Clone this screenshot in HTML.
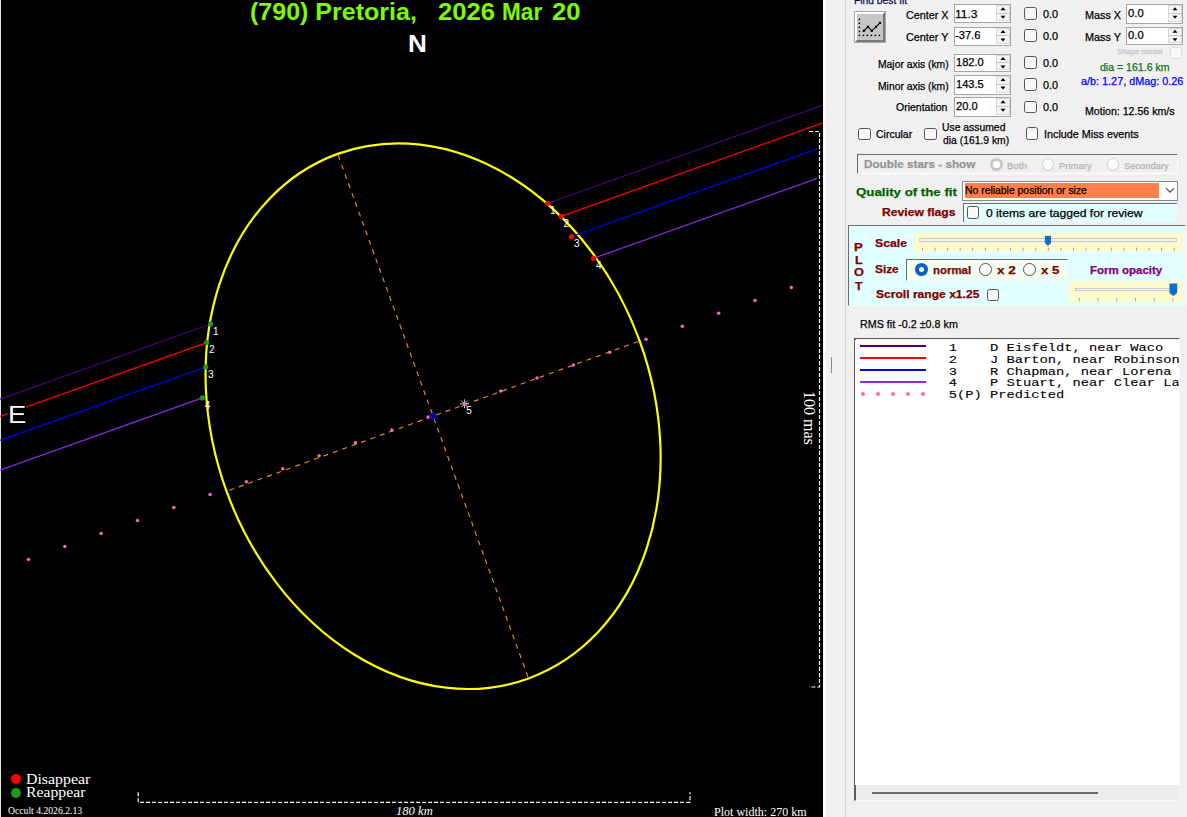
<!DOCTYPE html>
<html><head><meta charset="utf-8">
<style>
html,body{margin:0;padding:0;}
body{width:1187px;height:817px;position:relative;overflow:hidden;background:#ececec;font-family:"Liberation Sans",sans-serif;}
.a{position:absolute;white-space:pre;transform-origin:0 0;line-height:normal;}
.pt{-webkit-text-stroke:0.25px currentColor;}
svg text.lbl{font-family:"Liberation Sans",sans-serif;font-size:10px;fill:#fff;}
.mono{font-family:"Liberation Mono",monospace;font-size:13.75px;color:#000;-webkit-text-stroke:0.12px #000;}
</style></head><body>
<svg width="823" height="817" viewBox="0 0 823 817" style="position:absolute;left:0;top:0">
<rect x="0" y="0" width="823" height="817" fill="#000"/>
<rect x="0" y="0" width="1" height="817" fill="#e4e4e4"/>
<circle cx="28.5" cy="559.4" r="1.75" fill="#ff62c4"/>
<circle cx="64.8" cy="546.4" r="1.75" fill="#ff62c4"/>
<circle cx="101.1" cy="533.5" r="1.75" fill="#ff62c4"/>
<circle cx="137.5" cy="520.5" r="1.75" fill="#ff62c4"/>
<circle cx="173.8" cy="507.6" r="1.75" fill="#ff62c4"/>
<circle cx="210.1" cy="494.6" r="1.75" fill="#ff62c4"/>
<circle cx="246.4" cy="481.7" r="1.75" fill="#ff62c4"/>
<circle cx="282.8" cy="468.7" r="1.75" fill="#ff62c4"/>
<circle cx="319.1" cy="455.8" r="1.75" fill="#ff62c4"/>
<circle cx="355.4" cy="442.8" r="1.75" fill="#ff62c4"/>
<circle cx="391.7" cy="429.9" r="1.75" fill="#ff62c4"/>
<circle cx="428.1" cy="416.9" r="1.75" fill="#ff62c4"/>
<circle cx="464.4" cy="404.0" r="1.75" fill="#ff62c4"/>
<circle cx="500.7" cy="391.0" r="1.75" fill="#ff62c4"/>
<circle cx="537.0" cy="378.1" r="1.75" fill="#ff62c4"/>
<circle cx="573.4" cy="365.1" r="1.75" fill="#ff62c4"/>
<circle cx="609.7" cy="352.2" r="1.75" fill="#ff62c4"/>
<circle cx="646.0" cy="339.2" r="1.75" fill="#ff62c4"/>
<circle cx="682.3" cy="326.3" r="1.75" fill="#ff62c4"/>
<circle cx="718.7" cy="313.3" r="1.75" fill="#ff62c4"/>
<circle cx="755.0" cy="300.4" r="1.75" fill="#ff62c4"/>
<circle cx="791.3" cy="287.4" r="1.75" fill="#ff62c4"/>
<line x1="638.2" y1="341.5" x2="228.0" y2="490.8" stroke="#f08c0a" stroke-width="1.15" stroke-dasharray="5 5"/>
<line x1="338.2" y1="155.3" x2="528.0" y2="677.0" stroke="#f08c0a" stroke-width="1.15" stroke-dasharray="5 5"/>
<ellipse cx="433.1" cy="416.15" rx="219.8" ry="279.1" transform="rotate(-20 433.1 416.15)" fill="none" stroke="#ffff00" stroke-width="2.2"/>
<line x1="0" y1="399.2" x2="210.6" y2="324.0" stroke="#4b0082" stroke-width="1.2"/>
<line x1="547.7" y1="203.3" x2="823" y2="105.0" stroke="#4b0082" stroke-width="1.2"/>
<line x1="0" y1="416.4" x2="206.7" y2="342.6" stroke="#ff0000" stroke-width="1.2"/>
<line x1="561.2" y1="216.4" x2="823" y2="122.9" stroke="#ff0000" stroke-width="1.2"/>
<line x1="0" y1="440.4" x2="205.7" y2="367.0" stroke="#0000ff" stroke-width="1.2"/>
<line x1="571.6" y1="236.5" x2="823" y2="146.8" stroke="#0000ff" stroke-width="1.2"/>
<line x1="0" y1="470.2" x2="202.4" y2="397.9" stroke="#8a2be2" stroke-width="1.2"/>
<line x1="593.6" y1="258.3" x2="823" y2="176.4" stroke="#8a2be2" stroke-width="1.2"/>
<circle cx="432.8" cy="416.2" r="2.6" fill="none" stroke="#0000ff" stroke-width="1.8"/>
<g stroke="#b8d8d8" stroke-width="0.9">
<line x1="460" y1="403.8" x2="469" y2="403.8"/><line x1="464.5" y1="399.3" x2="464.5" y2="408.3"/>
<line x1="461.3" y1="400.6" x2="467.7" y2="407"/><line x1="461.3" y1="407" x2="467.7" y2="400.6"/>
</g>
<circle cx="464.5" cy="403.8" r="1.8" fill="#ff69b4"/>
<text x="466.2" y="413.8" class="lbl">5</text>
<circle cx="210.6" cy="324.0" r="2.6" fill="#1e9a1e"/>
<circle cx="547.7" cy="203.3" r="2.6" fill="#ff0000"/>
<text x="212.9" y="334.8" class="lbl">1</text>
<text x="550.0" y="214.10000000000002" class="lbl">1</text>
<circle cx="206.7" cy="342.6" r="2.6" fill="#1e9a1e"/>
<circle cx="561.2" cy="216.4" r="2.6" fill="#ff0000"/>
<text x="209.0" y="353.40000000000003" class="lbl">2</text>
<text x="563.5" y="227.20000000000002" class="lbl">2</text>
<circle cx="205.7" cy="367.0" r="2.6" fill="#1e9a1e"/>
<circle cx="571.6" cy="236.5" r="2.6" fill="#ff0000"/>
<text x="208.0" y="377.8" class="lbl">3</text>
<text x="573.9" y="247.3" class="lbl">3</text>
<circle cx="202.4" cy="397.9" r="2.6" fill="#1e9a1e"/>
<circle cx="593.6" cy="258.3" r="2.6" fill="#ff0000"/>
<text x="204.70000000000002" y="408.7" class="lbl">4</text>
<text x="595.9" y="269.1" class="lbl">4</text>
<path d="M809 131.5 H819.5 V687 H809" fill="none" stroke="#000" stroke-width="5"/>
<path d="M809 131.5 H819.5 V687 H809" fill="none" stroke="#fff" stroke-width="1.2" stroke-dasharray="4 2"/>
<path d="M138.2 792.2 V802.3 H690 V792.2" fill="none" stroke="#fff" stroke-width="1.2" stroke-dasharray="4 2"/>

</svg>
<div class="a" style="left:249.74px;top:-1.5px;font-family:'Liberation Sans',sans-serif;font-size:23px;font-weight:bold;font-style:normal;color:#7cfc00;transform:scaleX(1.0876);">(790) Pretoria,</div><div class="a" style="left:437.63px;top:-1.5px;font-family:'Liberation Sans',sans-serif;font-size:23px;font-weight:bold;font-style:normal;color:#7cfc00;transform:scaleX(1.1157);">2026</div><div class="a" style="left:501.96px;top:-1.5px;font-family:'Liberation Sans',sans-serif;font-size:23px;font-weight:bold;font-style:normal;color:#7cfc00;transform:scaleX(0.9822);">Mar</div><div class="a" style="left:552.13px;top:-1.5px;font-family:'Liberation Sans',sans-serif;font-size:23px;font-weight:bold;font-style:normal;color:#7cfc00;transform:scaleX(1.1146);">20</div><div class="a" style="left:407.81px;top:31.0px;font-family:'Liberation Sans',sans-serif;font-size:23.5px;font-weight:bold;font-style:normal;color:#ffffff;transform:scaleX(1.1106);">N</div><div class="a" style="left:8px;top:401px;width:17.7px;height:26px;background:#000"></div><div class="a" style="left:7.83px;top:402.01px;font-family:'Liberation Sans',sans-serif;font-size:23px;font-weight:normal;font-style:normal;color:#ffffff;transform:scaleX(1.1885);">E</div><div class="a" style="left:25.59px;top:770.5px;font-family:'Liberation Serif',serif;font-size:15px;font-weight:normal;font-style:normal;color:#ffffff;transform:scaleX(1.0574);">Disappear</div><div class="a" style="left:25.61px;top:784.4px;font-family:'Liberation Serif',serif;font-size:15px;font-weight:normal;font-style:normal;color:#ffffff;transform:scaleX(1.0489);">Reappear</div><div class="a" style="left:7.53px;top:804.87px;font-family:'Liberation Serif',serif;font-size:10.5px;font-weight:normal;font-style:normal;color:#ffffff;transform:scaleX(0.9204);">Occult 4.2026.2.13</div><div class="a" style="left:395.9px;top:804.29px;font-family:'Liberation Serif',serif;font-size:12.5px;font-weight:normal;font-style:italic;color:#ffffff;transform:scaleX(1.0077);">180 km</div><div class="a" style="left:713.61px;top:803.86px;font-family:'Liberation Serif',serif;font-size:13px;font-weight:normal;font-style:normal;color:#ffffff;transform:scaleX(0.9255);">Plot width: 270 km</div><div class="a" style="left:10.5px;top:773.5px;width:10.2px;height:10.0px;background:#f00;border-radius:50%"></div><div class="a" style="left:10.5px;top:787.8px;width:10.2px;height:10.0px;background:#219421;border-radius:50%"></div><div class="a" style="left:818px;top:391.2px;font-family:'Liberation Serif',serif;font-size:16px;color:#fff;transform:rotate(90deg);transform-origin:0 0;">100 mas</div>
<div class="a" style="left:823px;top:0px;width:364px;height:817px;background:#f0f0f0"></div><div class="a" style="left:823px;top:0px;width:3px;height:817px;background:#fbfbfb"></div><div class="a" style="left:845px;top:0px;width:1px;height:817px;background:#d4d4d4"></div><div class="a" style="left:854px;top:11px;width:32px;height:31.5px;background:#a8a8a8"></div><div class="a" style="left:855px;top:12px;width:30px;height:29.5px;background:#c6c6c6;border-top:2px solid #fff;border-left:2px solid #fff;border-right:2px solid #787878;border-bottom:2px solid #787878;box-sizing:border-box"></div><svg class="a" style="left:854px;top:11px" width="32" height="32"><g fill="#000"><rect x="4.65" y="7.65" width="1.5" height="1.5"/><rect x="4.65" y="11.55" width="1.5" height="1.5"/><rect x="4.65" y="15.55" width="1.5" height="1.5"/><rect x="4.65" y="19.75" width="1.5" height="1.5"/><rect x="4.65" y="23.65" width="1.5" height="1.5"/><rect x="8.75" y="23.65" width="1.5" height="1.5"/><rect x="12.65" y="23.65" width="1.5" height="1.5"/><rect x="16.65" y="23.65" width="1.5" height="1.5"/><rect x="20.75" y="23.65" width="1.5" height="1.5"/><rect x="24.65" y="23.65" width="1.5" height="1.5"/><rect x="8.700000000000001" y="18.7" width="2.2" height="2.2"/><rect x="12.9" y="14.700000000000001" width="2.2" height="2.2"/><rect x="16.7" y="18.7" width="2.2" height="2.2"/><rect x="20.9" y="14.700000000000001" width="2.2" height="2.2"/><rect x="24.9" y="10.8" width="2.2" height="2.2"/></g><polyline points="9.8,19.8 14,15.8 17.8,19.8 22,15.8 26,11.9" fill="none" stroke="#000" stroke-width="1.1"/></svg><div class="a" style="left:954.1px;top:3.8px;width:57.39999999999998px;height:19.5px;background:#fff;border:1px solid #a6a6a6;box-sizing:border-box"></div><div class="a" style="left:996.0px;top:4.8px;width:13.5px;height:16.5px;background:#f4f4f4;border:1px solid #d8d8d8;box-sizing:border-box"></div><div class="a" style="left:996.0px;top:12.55px;width:13.5px;height:1.0px;background:#c8c8c8"></div><svg class="a" style="left:998.75px;top:3.8px" width="8" height="19.5"><polygon points="1.5,6.25 4,3.25 6.5,6.25" fill="#000"/><polygon points="1.5,11.75 6.5,11.75 4,14.75" fill="#000"/></svg><div class="a" style="left:954.1px;top:26.6px;width:57.39999999999998px;height:19.0px;background:#fff;border:1px solid #a6a6a6;box-sizing:border-box"></div><div class="a" style="left:996.0px;top:27.6px;width:13.5px;height:16.0px;background:#f4f4f4;border:1px solid #d8d8d8;box-sizing:border-box"></div><div class="a" style="left:996.0px;top:35.1px;width:13.5px;height:1.0px;background:#c8c8c8"></div><svg class="a" style="left:998.75px;top:26.6px" width="8" height="19.0"><polygon points="1.5,6.0 4,3.0 6.5,6.0" fill="#000"/><polygon points="1.5,11.5 6.5,11.5 4,14.5" fill="#000"/></svg><div class="a" style="left:954.1px;top:53.5px;width:57.39999999999998px;height:18.900000000000006px;background:#fff;border:1px solid #a6a6a6;box-sizing:border-box"></div><div class="a" style="left:996.0px;top:54.5px;width:13.5px;height:15.900000000000006px;background:#f4f4f4;border:1px solid #d8d8d8;box-sizing:border-box"></div><div class="a" style="left:996.0px;top:61.95px;width:13.5px;height:1.0px;background:#c8c8c8"></div><svg class="a" style="left:998.75px;top:53.5px" width="8" height="18.900000000000006"><polygon points="1.5,5.950000000000003 4,2.950000000000003 6.5,5.950000000000003" fill="#000"/><polygon points="1.5,11.450000000000003 6.5,11.450000000000003 4,14.450000000000003" fill="#000"/></svg><div class="a" style="left:954.1px;top:75.4px;width:57.39999999999998px;height:19.19999999999999px;background:#fff;border:1px solid #a6a6a6;box-sizing:border-box"></div><div class="a" style="left:996.0px;top:76.4px;width:13.5px;height:16.19999999999999px;background:#f4f4f4;border:1px solid #d8d8d8;box-sizing:border-box"></div><div class="a" style="left:996.0px;top:84.0px;width:13.5px;height:1.0px;background:#c8c8c8"></div><svg class="a" style="left:998.75px;top:75.4px" width="8" height="19.19999999999999"><polygon points="1.5,6.099999999999994 4,3.0999999999999943 6.5,6.099999999999994" fill="#000"/><polygon points="1.5,11.599999999999994 6.5,11.599999999999994 4,14.599999999999994" fill="#000"/></svg><div class="a" style="left:954.1px;top:97.2px;width:57.39999999999998px;height:19.39999999999999px;background:#fff;border:1px solid #a6a6a6;box-sizing:border-box"></div><div class="a" style="left:996.0px;top:98.2px;width:13.5px;height:16.39999999999999px;background:#f4f4f4;border:1px solid #d8d8d8;box-sizing:border-box"></div><div class="a" style="left:996.0px;top:105.9px;width:13.5px;height:1.0px;background:#c8c8c8"></div><svg class="a" style="left:998.75px;top:97.2px" width="8" height="19.39999999999999"><polygon points="1.5,6.200000000000003 4,3.200000000000003 6.5,6.200000000000003" fill="#000"/><polygon points="1.5,11.700000000000003 6.5,11.700000000000003 4,14.700000000000003" fill="#000"/></svg><div class="a" style="left:1126.4px;top:4.3px;width:57.09999999999991px;height:19.3px;background:#fff;border:1px solid #a6a6a6;box-sizing:border-box"></div><div class="a" style="left:1168.0px;top:5.3px;width:13.5px;height:16.3px;background:#f4f4f4;border:1px solid #d8d8d8;box-sizing:border-box"></div><div class="a" style="left:1168.0px;top:12.950000000000001px;width:13.5px;height:1.0px;background:#c8c8c8"></div><svg class="a" style="left:1170.75px;top:4.3px" width="8" height="19.3"><polygon points="1.5,6.150000000000002 4,3.150000000000002 6.5,6.150000000000002" fill="#000"/><polygon points="1.5,11.650000000000002 6.5,11.650000000000002 4,14.650000000000002" fill="#000"/></svg><div class="a" style="left:1126.4px;top:26.6px;width:57.09999999999991px;height:18.5px;background:#fff;border:1px solid #a6a6a6;box-sizing:border-box"></div><div class="a" style="left:1168.0px;top:27.6px;width:13.5px;height:15.5px;background:#f4f4f4;border:1px solid #d8d8d8;box-sizing:border-box"></div><div class="a" style="left:1168.0px;top:34.85px;width:13.5px;height:1.0px;background:#c8c8c8"></div><svg class="a" style="left:1170.75px;top:26.6px" width="8" height="18.5"><polygon points="1.5,5.75 4,2.75 6.5,5.75" fill="#000"/><polygon points="1.5,11.25 6.5,11.25 4,14.25" fill="#000"/></svg><div class="a" style="left:1024.2px;top:7.2px;width:12.400000000000091px;height:12.400000000000002px;border:1.4px solid #555;border-radius:2.5px;box-sizing:border-box;background:#f8f8f8"></div><div class="a" style="left:1024.2px;top:29.2px;width:12.400000000000091px;height:12.400000000000002px;border:1.4px solid #555;border-radius:2.5px;box-sizing:border-box;background:#f8f8f8"></div><div class="a" style="left:1024.2px;top:56.4px;width:12.400000000000091px;height:12.399999999999999px;border:1.4px solid #555;border-radius:2.5px;box-sizing:border-box;background:#f8f8f8"></div><div class="a" style="left:1024.2px;top:78.3px;width:12.400000000000091px;height:12.400000000000006px;border:1.4px solid #555;border-radius:2.5px;box-sizing:border-box;background:#f8f8f8"></div><div class="a" style="left:1024.2px;top:100.5px;width:12.400000000000091px;height:12.400000000000006px;border:1.4px solid #555;border-radius:2.5px;box-sizing:border-box;background:#f8f8f8"></div><div class="a" style="left:1169.5px;top:46.9px;width:12.200000000000045px;height:12.199999999999996px;border:1.4px solid #dcdcdc;border-radius:2.5px;box-sizing:border-box;background:#f8f8f8"></div><div class="a" style="left:858.2px;top:127.5px;width:12.399999999999977px;height:12.400000000000006px;border:1.4px solid #555;border-radius:2.5px;box-sizing:border-box;background:#f8f8f8"></div><div class="a" style="left:924.2px;top:127.5px;width:12.399999999999977px;height:12.400000000000006px;border:1.4px solid #555;border-radius:2.5px;box-sizing:border-box;background:#f8f8f8"></div><div class="a" style="left:1026.1px;top:127.3px;width:12.400000000000091px;height:12.399999999999991px;border:1.4px solid #555;border-radius:2.5px;box-sizing:border-box;background:#f8f8f8"></div><div class="a" style="left:857.4px;top:154.1px;width:320.19999999999993px;height:19.80000000000001px;border-top:1.5px solid #6e6a6e;border-left:1.5px solid #6e6a6e;border-right:1px solid #fff;border-bottom:1px solid #fff;box-sizing:border-box"></div><div class="a" style="left:990px;top:158.4px;width:12.700000000000045px;height:12.699999999999989px;border:3px solid #c8c8c8;border-radius:50%;box-sizing:border-box;background:#fff"></div><div class="a" style="left:1042.3px;top:158.4px;width:12.200000000000045px;height:12.199999999999989px;border:1.2px solid #d0d0d0;border-radius:50%;box-sizing:border-box;background:#fbfbfb"></div><div class="a" style="left:1107.2px;top:158.4px;width:12.200000000000045px;height:12.199999999999989px;border:1.2px solid #d0d0d0;border-radius:50%;box-sizing:border-box;background:#fbfbfb"></div><div class="a" style="left:962.3px;top:180.5px;width:215.79999999999995px;height:20.0px;background:#fff;border:1px solid #8a8a8a;box-sizing:border-box"></div><div class="a" style="left:965.1px;top:183.2px;width:193.80000000000007px;height:14.400000000000006px;background:#ff7f4a"></div><svg class="a" style="left:1165px;top:187px" width="10" height="7"><polyline points="1,1.2 5,5.2 9,1.2" fill="none" stroke="#404040" stroke-width="1.1"/></svg><div class="a" style="left:963.1px;top:202.8px;width:214.39999999999998px;height:19.19999999999999px;background:#e2ffff;border-top:1.5px solid #6e6a6e;border-left:1.5px solid #6e6a6e;box-sizing:border-box"></div><div class="a" style="left:967.1px;top:206.3px;width:12.399999999999977px;height:12.400000000000006px;border:1.4px solid #555;border-radius:2.5px;box-sizing:border-box;background:#f8f8f8"></div><div class="a" style="left:847.7px;top:224.7px;width:338.0999999999999px;height:81.10000000000002px;background:#e2ffff;border-top:1.6px solid #6e6a6e;border-left:1.6px solid #6e6a6e;border-right:1px solid #fafafa;border-bottom:1px solid #fafafa;box-sizing:border-box"></div><div class="a" style="left:914.3px;top:233.1px;width:268.4000000000001px;height:18.700000000000017px;background:#fffacc"></div><div class="a" style="left:918.9px;top:238.3px;width:257.80000000000007px;height:3.5px;background:#f2f2f2;border:1px solid #c8c8c8;box-sizing:border-box"></div><svg class="a" style="left:914.3px;top:233.1px" width="269" height="19"><rect x="7.90" y="14.5" width="1" height="3.3" fill="#a898c8"/><rect x="20.49" y="14.5" width="1" height="3.3" fill="#a898c8"/><rect x="33.08" y="14.5" width="1" height="3.3" fill="#a898c8"/><rect x="45.67" y="14.5" width="1" height="3.3" fill="#a898c8"/><rect x="58.26" y="14.5" width="1" height="3.3" fill="#a898c8"/><rect x="70.85" y="14.5" width="1" height="3.3" fill="#a898c8"/><rect x="83.44" y="14.5" width="1" height="3.3" fill="#a898c8"/><rect x="96.03" y="14.5" width="1" height="3.3" fill="#a898c8"/><rect x="108.62" y="14.5" width="1" height="3.3" fill="#a898c8"/><rect x="121.21" y="14.5" width="1" height="3.3" fill="#a898c8"/><rect x="133.80" y="14.5" width="1" height="3.3" fill="#a898c8"/><rect x="146.39" y="14.5" width="1" height="3.3" fill="#a898c8"/><rect x="158.98" y="14.5" width="1" height="3.3" fill="#a898c8"/><rect x="171.57" y="14.5" width="1" height="3.3" fill="#a898c8"/><rect x="184.16" y="14.5" width="1" height="3.3" fill="#a898c8"/><rect x="196.75" y="14.5" width="1" height="3.3" fill="#a898c8"/><rect x="209.34" y="14.5" width="1" height="3.3" fill="#a898c8"/><rect x="221.93" y="14.5" width="1" height="3.3" fill="#a898c8"/><rect x="234.52" y="14.5" width="1" height="3.3" fill="#a898c8"/><rect x="247.11" y="14.5" width="1" height="3.3" fill="#a898c8"/><rect x="259.70" y="14.5" width="1" height="3.3" fill="#a898c8"/></svg><svg class="a" style="left:1044px;top:235px" width="8" height="12"><polygon points="0.9,1 7,1 7,8 4,11 0.9,8" fill="#0a6ed0"/></svg><div class="a" style="left:905.8px;top:258.6px;width:161.9000000000001px;height:22.299999999999955px;background:#f2ffee;border-top:1.5px solid #6e6a6e;border-left:1.5px solid #6e6a6e;border-right:1px solid #fafafa;border-bottom:1px solid #fafafa;box-sizing:border-box"></div><div class="a" style="left:915px;top:263.2px;width:13px;height:12.699999999999989px;border:4.4px solid #0a62c0;border-radius:50%;box-sizing:border-box;background:#fff"></div><div class="a" style="left:978.8px;top:263.2px;width:12.799999999999955px;height:12.800000000000011px;border:1.2px solid #555;border-radius:50%;box-sizing:border-box;background:#fbfbfb"></div><div class="a" style="left:1023.3px;top:263.2px;width:12.799999999999955px;height:12.800000000000011px;border:1.2px solid #555;border-radius:50%;box-sizing:border-box;background:#fbfbfb"></div><div class="a" style="left:1069.3px;top:281.2px;width:114.20000000000005px;height:20.400000000000034px;background:#fffacc"></div><div class="a" style="left:1075.3px;top:287.5px;width:101.10000000000014px;height:3.3000000000000114px;background:#f2f2f2;border:1px solid #c8c8c8;box-sizing:border-box"></div><svg class="a" style="left:1069.3px;top:281.2px" width="115" height="21"><rect x="9.80" y="17" width="1" height="3.2" fill="#a898c8"/><rect x="28.54" y="17" width="1" height="3.2" fill="#a898c8"/><rect x="47.28" y="17" width="1" height="3.2" fill="#a898c8"/><rect x="66.02" y="17" width="1" height="3.2" fill="#a898c8"/><rect x="84.76" y="17" width="1" height="3.2" fill="#a898c8"/><rect x="103.50" y="17" width="1" height="3.2" fill="#a898c8"/></svg><svg class="a" style="left:1169px;top:282.5px" width="9" height="14"><polygon points="0.5,0.5 8.2,0.5 8.2,10 4.35,13 0.5,10" fill="#0a6ed0"/></svg><div class="a" style="left:987.1px;top:288.6px;width:12.399999999999977px;height:12.399999999999977px;border:1.4px solid #555;border-radius:2.5px;box-sizing:border-box;background:#f8f8f8"></div><div class="a" style="left:853.5px;top:338.2px;width:326.5px;height:463.2px;background:#ececec;border-top:1.5px solid #625a62;border-left:2px solid #625a62;border-right:1px solid #f8f8f8;border-bottom:1px solid #f8f8f8;box-sizing:border-box"></div><div class="a" style="left:855px;top:339.7px;width:323.5px;height:445.3px;background:#fff"></div><div class="a" style="left:872px;top:791.9px;width:225.5999999999999px;height:2.0px;background:#6a6a6a"></div><div class="a" style="left:831.2px;top:357.2px;width:1.1999999999999318px;height:15.600000000000023px;background:#8a8a8a"></div><div class="a" style="left:860px;top:344.7px;width:66px;height:2.3999999999999773px;background:#4b0082"></div><div class="a" style="left:860px;top:356.7px;width:66px;height:2.3999999999999773px;background:#ff0000"></div><div class="a" style="left:860px;top:368.7px;width:66px;height:2.3999999999999773px;background:#0000ff"></div><div class="a" style="left:860px;top:380.6px;width:66px;height:2.3999999999999773px;background:#8a2be2"></div><div class="a" style="left:860.7px;top:392.3px;width:4.0px;height:4.0px;background:#ff69b4;border-radius:50%"></div><div class="a" style="left:875.75px;top:392.3px;width:4.0px;height:4.0px;background:#ff69b4;border-radius:50%"></div><div class="a" style="left:890.8000000000001px;top:392.3px;width:4.0px;height:4.0px;background:#ff69b4;border-radius:50%"></div><div class="a" style="left:905.85px;top:392.3px;width:4.0px;height:4.0px;background:#ff69b4;border-radius:50%"></div><div class="a" style="left:920.9000000000001px;top:392.3px;width:4.0px;height:4.0px;background:#ff69b4;border-radius:50%"></div>
<div class="a pt" style="left:853.68px;top:-6.35px;font-family:'Liberation Sans',sans-serif;font-size:11px;font-weight:normal;font-style:normal;color:#0a0a50;transform:scaleX(0.9351);">Find best fit</div><div class="a pt" style="left:905.98px;top:8.75px;font-family:'Liberation Sans',sans-serif;font-size:11px;font-weight:normal;font-style:normal;color:#000000;transform:scaleX(0.9766);">Center X</div><div class="a pt" style="left:905.98px;top:30.95px;font-family:'Liberation Sans',sans-serif;font-size:11px;font-weight:normal;font-style:normal;color:#000000;transform:scaleX(0.9794);">Center Y</div><div class="a pt" style="left:877.76px;top:57.95px;font-family:'Liberation Sans',sans-serif;font-size:11px;font-weight:normal;font-style:normal;color:#000000;transform:scaleX(0.9403);">Major axis (km)</div><div class="a pt" style="left:877.76px;top:79.75px;font-family:'Liberation Sans',sans-serif;font-size:11px;font-weight:normal;font-style:normal;color:#000000;transform:scaleX(0.9403);">Minor axis (km)</div><div class="a pt" style="left:896.35px;top:100.95px;font-family:'Liberation Sans',sans-serif;font-size:11px;font-weight:normal;font-style:normal;color:#000000;transform:scaleX(0.9555);">Orientation</div><div class="a pt" style="left:955.1px;top:7.75px;font-family:'Liberation Sans',sans-serif;font-size:11px;font-weight:normal;font-style:normal;color:#000000;transform:scaleX(1.0929);">11.3</div><div class="a pt" style="left:955.19px;top:29.35px;font-family:'Liberation Sans',sans-serif;font-size:11px;font-weight:normal;font-style:normal;color:#000000;transform:scaleX(1.012);">-37.6</div><div class="a pt" style="left:955.71px;top:56.15px;font-family:'Liberation Sans',sans-serif;font-size:11px;font-weight:normal;font-style:normal;color:#000000;transform:scaleX(1.0073);">182.0</div><div class="a pt" style="left:955.71px;top:77.95px;font-family:'Liberation Sans',sans-serif;font-size:11px;font-weight:normal;font-style:normal;color:#000000;transform:scaleX(1.0051);">143.5</div><div class="a pt" style="left:955.69px;top:99.85px;font-family:'Liberation Sans',sans-serif;font-size:11px;font-weight:normal;font-style:normal;color:#000000;transform:scaleX(1.0138);">20.0</div><div class="a pt" style="left:1042.87px;top:8.05px;font-family:'Liberation Sans',sans-serif;font-size:11px;font-weight:normal;font-style:normal;color:#000000;transform:scaleX(0.987);">0.0</div><div class="a pt" style="left:1042.87px;top:30.15px;font-family:'Liberation Sans',sans-serif;font-size:11px;font-weight:normal;font-style:normal;color:#000000;transform:scaleX(0.987);">0.0</div><div class="a pt" style="left:1042.87px;top:56.95px;font-family:'Liberation Sans',sans-serif;font-size:11px;font-weight:normal;font-style:normal;color:#000000;transform:scaleX(0.987);">0.0</div><div class="a pt" style="left:1042.87px;top:78.75px;font-family:'Liberation Sans',sans-serif;font-size:11px;font-weight:normal;font-style:normal;color:#000000;transform:scaleX(0.987);">0.0</div><div class="a pt" style="left:1042.87px;top:101.05px;font-family:'Liberation Sans',sans-serif;font-size:11px;font-weight:normal;font-style:normal;color:#000000;transform:scaleX(0.987);">0.0</div><div class="a pt" style="left:1084.51px;top:9.05px;font-family:'Liberation Sans',sans-serif;font-size:11px;font-weight:normal;font-style:normal;color:#000000;transform:scaleX(0.9838);">Mass X</div><div class="a pt" style="left:1084.51px;top:30.65px;font-family:'Liberation Sans',sans-serif;font-size:11px;font-weight:normal;font-style:normal;color:#000000;transform:scaleX(0.9838);">Mass Y</div><div class="a pt" style="left:1127.65px;top:7.25px;font-family:'Liberation Sans',sans-serif;font-size:11px;font-weight:normal;font-style:normal;color:#000000;transform:scaleX(1.0223);">0.0</div><div class="a pt" style="left:1127.65px;top:29.05px;font-family:'Liberation Sans',sans-serif;font-size:11px;font-weight:normal;font-style:normal;color:#000000;transform:scaleX(1.0223);">0.0</div><div class="a pt" style="left:1116.81px;top:47.2px;font-family:'Liberation Sans',sans-serif;font-size:8px;font-weight:normal;font-style:normal;color:#c4c4c4;transform:scaleX(0.9638);">Shape model</div><div class="a pt" style="left:1099.74px;top:60.65px;font-family:'Liberation Sans',sans-serif;font-size:11px;font-weight:normal;font-style:normal;color:#107010;transform:scaleX(0.9595);">dia = 161.6 km</div><div class="a pt" style="left:1080.84px;top:74.75px;font-family:'Liberation Sans',sans-serif;font-size:11px;font-weight:normal;font-style:normal;color:#0000ff;transform:scaleX(0.9848);">a/b: 1.27, dMag: 0.26</div><div class="a pt" style="left:1084.73px;top:104.65px;font-family:'Liberation Sans',sans-serif;font-size:11px;font-weight:normal;font-style:normal;color:#000000;transform:scaleX(0.9631);">Motion: 12.56 km/s</div><div class="a pt" style="left:875.8px;top:127.95px;font-family:'Liberation Sans',sans-serif;font-size:11px;font-weight:normal;font-style:normal;color:#000000;transform:scaleX(0.9553);">Circular</div><div class="a pt" style="left:942.42px;top:120.85px;font-family:'Liberation Sans',sans-serif;font-size:11px;font-weight:normal;font-style:normal;color:#000000;transform:scaleX(0.9429);">Use assumed</div><div class="a pt" style="left:943.05px;top:133.65px;font-family:'Liberation Sans',sans-serif;font-size:11px;font-weight:normal;font-style:normal;color:#000000;transform:scaleX(0.9406);">dia (161.9 km)</div><div class="a pt" style="left:1044.48px;top:128.05px;font-family:'Liberation Sans',sans-serif;font-size:11px;font-weight:normal;font-style:normal;color:#000000;transform:scaleX(0.9802);">Include Miss events</div><div class="a pt" style="left:863.71px;top:157.54px;font-family:'Liberation Sans',sans-serif;font-size:11px;font-weight:bold;font-style:normal;color:#969696;transform:scaleX(1.0656);">Double stars - show</div><div class="a pt" style="left:1007.4px;top:160.84px;font-family:'Liberation Sans',sans-serif;font-size:9px;font-weight:normal;font-style:normal;color:#b4b4b4;transform:scaleX(1.0716);">Both</div><div class="a pt" style="left:1058.82px;top:160.84px;font-family:'Liberation Sans',sans-serif;font-size:9px;font-weight:normal;font-style:normal;color:#b4b4b4;transform:scaleX(1.054);">Primary</div><div class="a pt" style="left:1123.52px;top:160.84px;font-family:'Liberation Sans',sans-serif;font-size:9px;font-weight:normal;font-style:normal;color:#b4b4b4;transform:scaleX(1.0389);">Secondary</div><div class="a pt" style="left:856.09px;top:186.14px;font-family:'Liberation Sans',sans-serif;font-size:11px;font-weight:bold;font-style:normal;color:#006400;transform:scaleX(1.2055);">Quality of the fit</div><div class="a pt" style="left:881.77px;top:205.84px;font-family:'Liberation Sans',sans-serif;font-size:11px;font-weight:bold;font-style:normal;color:#800000;transform:scaleX(1.1033);">Review flags</div><div class="a pt" style="left:964.55px;top:183.95px;font-family:'Liberation Sans',sans-serif;font-size:11px;font-weight:normal;font-style:normal;color:#000000;transform:scaleX(0.9449);">No reliable position or size</div><div class="a pt" style="left:986.21px;top:206.65px;font-family:'Liberation Sans',sans-serif;font-size:11px;font-weight:normal;font-style:normal;color:#000000;transform:scaleX(1.1031);">0 items are tagged for review</div><div class="a pt" style="left:853.97px;top:240.54px;font-family:'Liberation Sans',sans-serif;font-size:11px;font-weight:bold;font-style:normal;color:#800000;transform:scaleX(1.1948);">P</div><div class="a pt" style="left:854.63px;top:253.54px;font-family:'Liberation Sans',sans-serif;font-size:11px;font-weight:bold;font-style:normal;color:#800000;transform:scaleX(1.1432);">L</div><div class="a pt" style="left:854.31px;top:266.44px;font-family:'Liberation Sans',sans-serif;font-size:11px;font-weight:bold;font-style:normal;color:#800000;transform:scaleX(1.1573);">O</div><div class="a pt" style="left:855.35px;top:279.64px;font-family:'Liberation Sans',sans-serif;font-size:11px;font-weight:bold;font-style:normal;color:#800000;transform:scaleX(1.1175);">T</div><div class="a pt" style="left:875.01px;top:236.54px;font-family:'Liberation Sans',sans-serif;font-size:11px;font-weight:bold;font-style:normal;color:#800000;transform:scaleX(1.1118);">Scale</div><div class="a pt" style="left:875.03px;top:262.64px;font-family:'Liberation Sans',sans-serif;font-size:11px;font-weight:bold;font-style:normal;color:#800000;transform:scaleX(1.0757);">Size</div><div class="a pt" style="left:932.93px;top:263.84px;font-family:'Liberation Sans',sans-serif;font-size:11px;font-weight:bold;font-style:normal;color:#800000;transform:scaleX(1.0383);">normal</div><div class="a pt" style="left:997.12px;top:263.84px;font-family:'Liberation Sans',sans-serif;font-size:11px;font-weight:bold;font-style:normal;color:#800000;transform:scaleX(1.2348);">x 2</div><div class="a pt" style="left:1041.13px;top:263.84px;font-family:'Liberation Sans',sans-serif;font-size:11px;font-weight:bold;font-style:normal;color:#800000;transform:scaleX(1.2031);">x 5</div><div class="a pt" style="left:1089.53px;top:263.64px;font-family:'Liberation Sans',sans-serif;font-size:11px;font-weight:bold;font-style:normal;color:#800080;transform:scaleX(1.0454);">Form opacity</div><div class="a pt" style="left:875.82px;top:288.14px;font-family:'Liberation Sans',sans-serif;font-size:11px;font-weight:bold;font-style:normal;color:#800000;transform:scaleX(1.0979);">Scroll range x1.25</div><div class="a pt" style="left:860.24px;top:317.95px;font-family:'Liberation Sans',sans-serif;font-size:11px;font-weight:normal;font-style:normal;color:#000000;transform:scaleX(0.9766);">RMS fit -0.2 ±0.8 km</div>
<div class="a" style="left:855px;top:339.7px;width:323.5px;height:445px;overflow:hidden"><div style="position:relative;left:-855px;top:-339.7px"><div class="a mono" style="left:948.7px;top:339.90px;transform-origin:0 11px;transform:scaleY(0.84)">1    D Eisfeldt, near Waco</div><div class="a mono" style="left:948.7px;top:351.75px;transform-origin:0 11px;transform:scaleY(0.84)">2    J Barton, near Robinson</div><div class="a mono" style="left:948.7px;top:363.60px;transform-origin:0 11px;transform:scaleY(0.84)">3    R Chapman, near Lorena</div><div class="a mono" style="left:948.7px;top:375.45px;transform-origin:0 11px;transform:scaleY(0.84)">4    P Stuart, near Clear Lake</div><div class="a mono" style="left:948.7px;top:387.30px;transform-origin:0 11px;transform:scaleY(0.84)">5(P) Predicted</div></div></div>
</body></html>
